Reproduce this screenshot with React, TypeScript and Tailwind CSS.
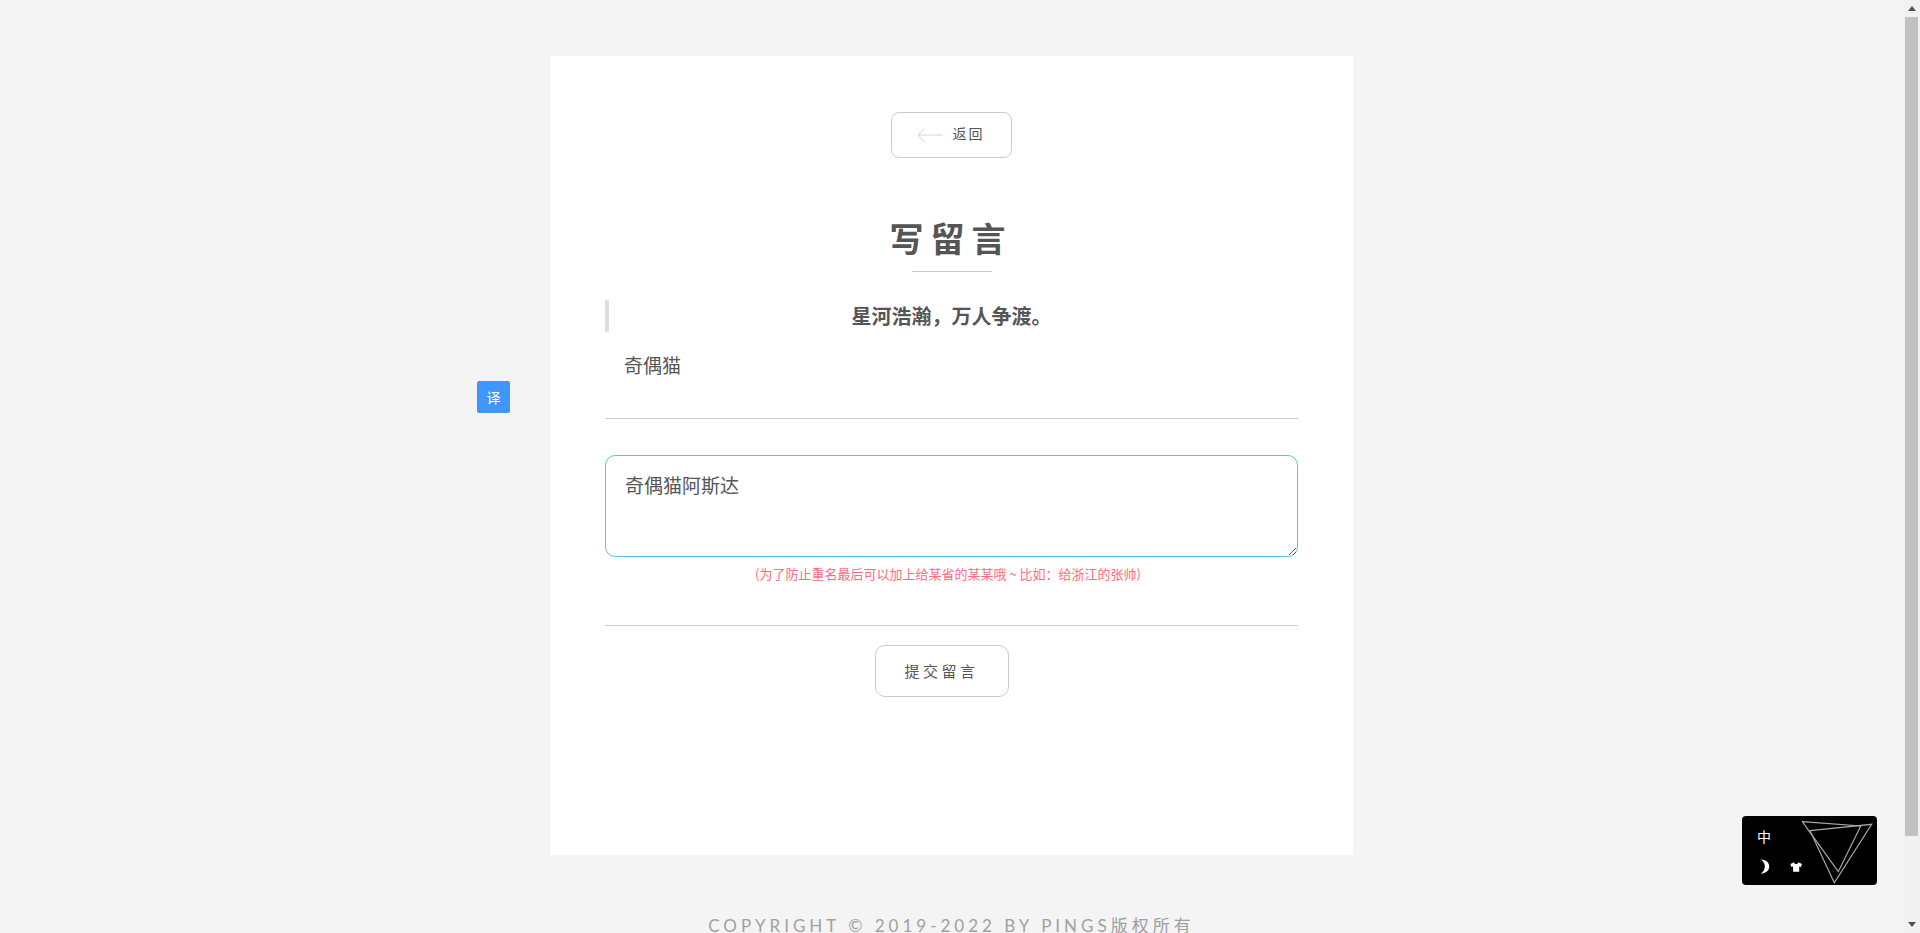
const cjk = "font-['Noto_Sans_CJK_SC','Liberation_Sans',sans-serif]";

function Scrollbar() {
  return (
    <div className="flex h-full w-[17px] shrink-0 flex-col items-center bg-[#f1f1f1]">
      <div className="flex h-[17px] w-full items-center justify-center">
        <div className="h-0 w-0 border-x-[4px] border-b-[5px] border-x-transparent border-b-[#505050]" />
      </div>
      <div className="h-[819px] w-[13px] bg-[#c1c1c1]" />
      <div className="flex-1" />
      <div className="flex h-[17px] w-full items-center justify-center">
        <div className="h-0 w-0 border-x-[4px] border-t-[5px] border-x-transparent border-t-[#505050]" />
      </div>
    </div>
  );
}

function BackArrow() {
  return (
    <svg width="26" height="14" viewBox="0 0 26 14" fill="none" stroke="#d4d4d4" strokeWidth="1">
      <path d="M26 7H1M7.5 0.5 1 7l6.5 6.5" />
    </svg>
  );
}

function Moon() {
  return (
    <svg width="11" height="17" viewBox="0 0 11 17" fill="#fff">
      <path d="M1 0.5C6.5 0.5 10.5 4 10.5 8.5S6.5 16.5 1 16.5C4 14.5 5.5 11.5 5.5 8.5S4 2.5 1 0.5z" />
    </svg>
  );
}

function Shirt() {
  return (
    <svg width="14" height="12" viewBox="0 0 14 12" fill="#fff">
      <path d="M4.5 0.5 0.5 2.5 1.5 6 3.5 5.5V11.5H10.5V5.5L12.5 6 13.5 2.5 9.5 0.5C9 2 8 2.5 7 2.5S5 2 4.5 0.5z" />
    </svg>
  );
}

function Widget() {
  return (
    <div className="fixed bottom-[48px] left-[1742px] flex h-[69px] w-[135px] rounded-[4px] bg-black">
      <div className={`flex w-[60px] flex-col pl-[15px] pt-[10px] text-white ${cjk}`}>
        <div className="h-[21px] text-[14px] leading-[21px]">中</div>
        <div className="mt-[11px] flex items-center gap-[20px] pl-[3px]">
          <Moon />
          <Shirt />
        </div>
      </div>
      <svg width="75" height="69" viewBox="0 0 75 69" fill="none" stroke="#a8a8a8" strokeWidth="1.2">
        <path d="M0.3 5.7 58.7 10 36.3 55.7z" />
        <path d="M8 14.7 69.7 8.3 32.3 66.7z" />
      </svg>
    </div>
  );
}

export default function App() {
  return (
    <div className={`flex h-[933px] w-full overflow-hidden bg-[#f4f4f4] text-[#555] ${cjk}`}>
      <main className="flex min-w-0 flex-1 flex-col items-center pt-[56px]">
        <section className="flex h-[799px] w-[803px] shrink-0 flex-col items-stretch bg-white px-[55px] pt-[56px]">
          <div className="flex justify-center">
            <button className="flex h-[46px] w-[121px] items-center justify-center gap-[10px] rounded-[8px] border border-[#ccc] bg-white pr-[2px] pb-[1px] text-[14px] tracking-[2px]">
              <BackArrow />
              <span className="pb-[3px]">返回</span>
            </button>
          </div>

          <h1 className="mt-[58px] pr-[1px] text-center text-[34px] leading-[44px] font-bold tracking-[7px]">写留言</h1>
          <div className="mx-auto mt-[11px] h-px w-[80px] bg-[#ccc]" />

          <blockquote className="mt-[28px] h-[32px] border-l-[4px] border-[#ddd] pr-[4px] text-center text-[20px] leading-[32px] font-bold">
            星河浩瀚，万人争渡。
          </blockquote>

          <div className="mt-[17px] h-[70px] border-b border-[#ccc] pl-[19px] text-[19px] leading-[32px]">奇偶猫</div>

          <textarea
            defaultValue="奇偶猫阿斯达"
            className={`mt-[36px] h-[102px] w-full rounded-[10px] border border-[#4fc3f7] px-[19px] py-[13px] text-[19px] leading-[32px] text-[#555] outline-none ${cjk}`}
          />

          <p className="mt-[7px] pr-[7px] text-center text-[13px] leading-[20px] text-[#ff6b81]">
            (为了防止重名最后可以加上给某省的某某哦 ~ 比如：给浙江的张帅)
          </p>

          <div className="mt-[41px] h-px w-full bg-[#ccc]" />

          <div className="mt-[19px] flex justify-center pr-[20px]">
            <button className="h-[52px] w-[134px] rounded-[10px] border border-[#ccc] bg-white text-[15px] tracking-[3.5px]">提交留言</button>
          </div>
        </section>

        <footer className="mt-[59px] text-[17px] leading-[24px] tracking-[4px] whitespace-nowrap text-[#a0a0a0] font-['Lato','Noto_Sans_CJK_SC',sans-serif]">
          COPYRIGHT © 2019-2022 BY PINGS版权所有
        </footer>
      </main>
      <Scrollbar />

      <button className="fixed top-[381px] left-[477px] h-[32px] w-[33px] rounded-[2px] bg-[#4096ff] text-[14px] text-white">译</button>
      <Widget />
    </div>
  );
}
